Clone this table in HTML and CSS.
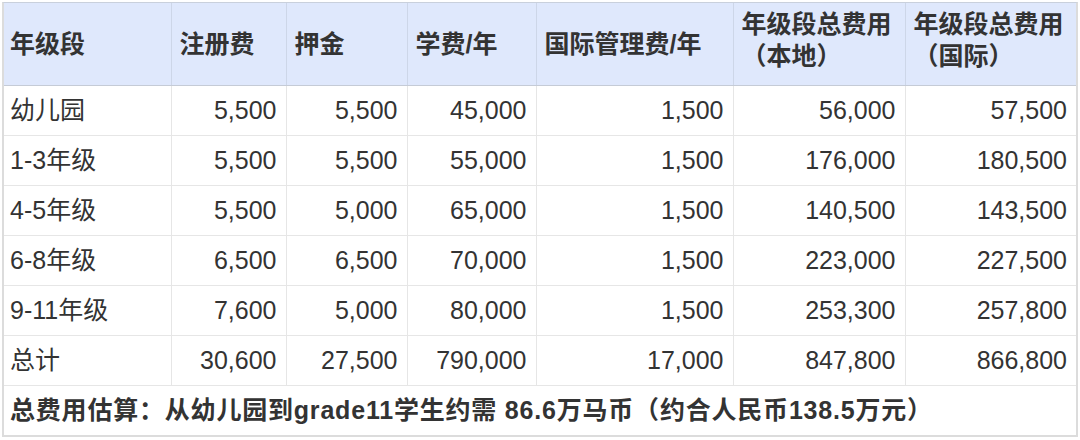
FILE: index.html
```html
<!DOCTYPE html>
<html lang="zh">
<head>
<meta charset="utf-8">
<title>学费表</title>
<link rel="stylesheet" href="styles.css">
</head>
<body>
<div class="wrap">
<table class="fees">
<colgroup>
<col class="c1"><col class="c2"><col class="c3"><col class="c4"><col class="c5"><col class="c6"><col class="c7">
</colgroup>
<thead>
<tr>
<th>年级段</th>
<th>注册费</th>
<th>押金</th>
<th>学费/年</th>
<th>国际管理费/年</th>
<th class="two">年级段总费用<br>（本地）</th>
<th class="two">年级段总费用<br>（国际）</th>
</tr>
</thead>
<tbody>
<tr><td>幼儿园</td><td>5,500</td><td>5,500</td><td>45,000</td><td>1,500</td><td>56,000</td><td>57,500</td></tr>
<tr><td>1-3年级</td><td>5,500</td><td>5,500</td><td>55,000</td><td>1,500</td><td>176,000</td><td>180,500</td></tr>
<tr><td>4-5年级</td><td>5,500</td><td>5,000</td><td>65,000</td><td>1,500</td><td>140,500</td><td>143,500</td></tr>
<tr><td>6-8年级</td><td>6,500</td><td>6,500</td><td>70,000</td><td>1,500</td><td>223,000</td><td>227,500</td></tr>
<tr><td>9-11年级</td><td>7,600</td><td>5,000</td><td>80,000</td><td>1,500</td><td>253,300</td><td>257,800</td></tr>
<tr><td>总计</td><td>30,600</td><td>27,500</td><td>790,000</td><td>17,000</td><td>847,800</td><td>866,800</td></tr>
<tr><td class="foot" colspan="7">总费用估算：从幼儿园到grade11学生约需 86.6万马币（约合人民币138.5万元）</td></tr>
</tbody>
</table>
</div>
</body>
</html>
```
FILE: styles.css
```css
html, body {
  margin: 0;
  padding: 0;
  background: #ffffff;
}
body {
  font-family: "Liberation Sans", "Noto Sans CJK SC", sans-serif;
  color: #333333;
  font-size: 25px;
}
.wrap {
  margin: 2px 2px 0 2px;
  border: 2px solid #dcdcdc;
  border-top-color: #c9d0dc;
  border-top-width: 1px;
}
.fees {
  width: 100%;
  table-layout: fixed;
  border-collapse: collapse;
}
.c1 { width: 167px; }
.c2 { width: 115px; }
.c3 { width: 121px; }
.c4 { width: 129px; }
.c5 { width: 197px; }
.c6 { width: 172px; }
.c7 { width: 171px; }
.fees th {
  background: #dfe8fc;
  font-weight: bold;
  text-align: left;
  height: 82px;
  padding: 0 6px 0 8px;
  line-height: 32px;
  vertical-align: middle;
  border-right: 1px solid #cdd6e8;
  border-bottom: 1px solid #c5cbd6;
  box-sizing: border-box;
  color: #333333;
}
.fees th:first-child {
  padding-left: 6px;
}
.fees th.two {
  padding-bottom: 7px;
}
.fees th:last-child,
.fees td:last-child {
  border-right: none;
}
.fees td {
  height: 50px;
  box-sizing: border-box;
  padding: 0 9px 0 6px;
  line-height: 30px;
  text-align: right;
  vertical-align: middle;
  border-right: 1px solid #e6e6e6;
  border-bottom: 1px solid #e6e6e6;
  white-space: nowrap;
}
.fees td:first-child {
  text-align: left;
}
.fees tr:last-child td {
  border-bottom: none;
}
.fees td.foot {
  text-align: left;
  font-weight: bold;
  border-right: none;
  letter-spacing: 0.8px;
}
```
